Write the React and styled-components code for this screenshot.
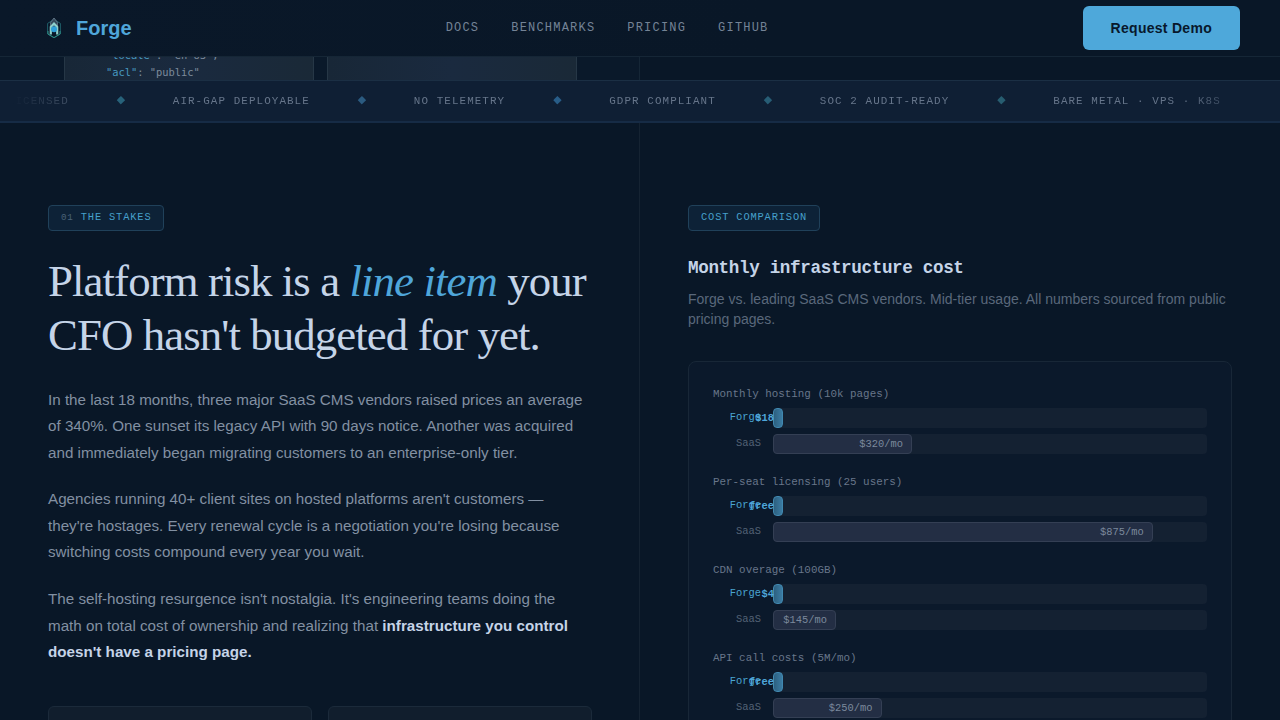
import React from 'react';
import styled, { createGlobalStyle } from 'styled-components';

const sans = "'Liberation Sans', Arial, sans-serif";
const serif = "'Liberation Serif', Georgia, serif";
const mono = "'Liberation Mono', 'Courier New', monospace";

const GlobalStyle = createGlobalStyle`
  * {
    box-sizing: border-box;
  }
  body {
    margin: 0;
    background: #091727;
    color: #c8d8e8;
    font-family: ${sans};
    overflow: hidden;
  }
  h2, h3, p {
    margin: 0;
  }
`;

//page frame
const Page = styled.div`
  height: 720px;
  display: flex;
  flex-direction: column;
  overflow: hidden;
`;
const Nav = styled.nav`
  flex: none;
  height: 57px;
  padding: 0 40px;
  display: flex;
  align-items: center;
  justify-content: space-between;
  background: linear-gradient(90deg, #0a1829, #091727 60%);
  border-bottom: 1px solid #152636;
`;
const Brand = styled.a`
  display: flex;
  align-items: center;
  gap: 8px;
  font-size: 20px;
  font-weight: 700;
  line-height: 28px;
  color: #4fa6da;
`;
const NavLinks = styled.div`
  display: flex;
  gap: 32px;
  padding-bottom: 1px;
`;
const NavLink = styled.a`
  font-family: ${mono};
  font-size: 12px;
  letter-spacing: 1.2px;
  text-transform: uppercase;
  color: #748396;
`;
const DemoButton = styled.button`
  height: 44px;
  padding: 0 28px;
  border: 0;
  border-radius: 6px;
  background: #4ea8da;
  color: #08182c;
  font-family: ${sans};
  font-size: 14px;
  font-weight: 700;
  letter-spacing: 0.28px;
`;

//bottom edge of the hero, scrolled under the nav
const Hero = styled.div`
  flex: none;
  height: 23px;
  display: grid;
  grid-template-columns: 1fr 1fr;
  overflow: hidden;
`;
const HeroCards = styled.div`
  display: flex;
  gap: 13px;
  padding: 0 62px 0 64px;
  background: #0a192a;
  border-right: 1px solid #152636;
`;
const CodeCard = styled.pre`
  flex: 1;
  margin: 0;
  padding: 0 0 0 41px;
  height: 23px;
  display: flex;
  flex-direction: column;
  justify-content: flex-end;
  border: solid #263746;
  border-width: 0 1px;
  background: linear-gradient(90deg, #182737, #1a2a3f 50%, #1a2937);
  font-family: 'DejaVu Sans Mono', monospace;
  font-size: 10.4px;
  line-height: 17px;
  color: #7c8a9b;
`;
const Key = styled.span`
  color: #4798c0;
`;
const CodeLine = styled.span`
  flex: none;
  &.last {
    height: 16px;
  }
`;

//ticker
const Ticker = styled.div`
  flex: none;
  height: 43px;
  background: #0f1f34;
  border-top: 1px solid #1b2f44;
  border-bottom: 2px solid #162b45;
  overflow: hidden;
`;
const TickerTrack = styled.div`
  height: 40px;
  display: flex;
  justify-content: flex-start;
  overflow: hidden;
  mask-image: linear-gradient(90deg, transparent 1%, #000 9%, #000 92%, transparent 99%);
`;
const TickerRow = styled.div`
  display: flex;
  align-items: center;
  gap: 48px;
  margin-left: -22.6px;
  white-space: nowrap;
`;
const TickerItem = styled.span`
  font-family: ${mono};
  font-size: 10.88px;
  letter-spacing: 1.088px;
  color: #66758a;
`;
const Diamond = styled.span`
  width: 8px;
  font-family: 'DejaVu Sans', sans-serif;
  font-size: 10.88px;
  line-height: 12px;
  padding-bottom: 2px;
  color: ${props => props.color};
`;

//two columns
const Columns = styled.div`
  flex: 1;
  min-height: 0;
  display: grid;
  grid-template-columns: 1fr 1fr;
`;
const Column = styled.section`
  padding: 82px 48px 0;
  &.left {
    padding-right: 47px;
    border-right: 1px solid #152332;
  }
`;
const Tag = styled.div`
  width: fit-content;
  height: 26px;
  padding: 0 12px;
  line-height: 22px;
  border: 1px solid #20415a;
  border-radius: 4px;
  background: #0d2237;
  font-family: ${mono};
  font-size: 10.4px;
  letter-spacing: 0.832px;
  text-transform: uppercase;
  color: #46a0cc;
`;
const TagNumber = styled.span`
  font-size: 9.2px;
  color: #4a6277;
`;
const Title = styled.h2`
  margin-top: 24px;
  font-family: ${serif};
  font-size: 44.8px;
  font-weight: 400;
  line-height: 53.76px;
  letter-spacing: -0.896px;
  white-space: nowrap;
  color: #c5d4e8;
  em {
    color: #4fa6da;
  }
`;
const Body = styled.div`
  margin-top: 23.97px;
  display: flex;
  flex-direction: column;
  gap: 20px;
`;
const P = styled.p`
  font-size: 15.2px;
  line-height: 26.6px;
  color: #8290a2;
  strong {
    color: #c5d4e8;
  }
`;
const Stats = styled.div`
  margin-top: 40px;
  display: grid;
  grid-template-columns: 1fr 1fr;
  gap: 16px;
`;
const Stat = styled.div`
  height: 110px;
  border: 1px solid #1b2a3a;
  border-radius: 6px;
  background: #111e2d;
`;
const ChartTitle = styled.h3`
  margin-top: 26px;
  font-family: ${mono};
  font-size: 17.6px;
  line-height: 22px;
  letter-spacing: -0.352px;
  color: #c5d4e8;
`;
const ChartNote = styled.p`
  margin-top: 10px;
  font-size: 14px;
  line-height: 20.2px;
  color: #5a687b;
`;
const Chart = styled.div`
  height: 420px;
  margin-top: 32px;
  padding: 24px;
  display: flex;
  flex-direction: column;
  gap: 20px;
  border: 1px solid #182737;
  border-radius: 8px;
  background: #0b192b;
`;
const Group = styled.div`
  display: flex;
  flex-direction: column;
  gap: 6px;
`;
const GroupLabel = styled.div`
  height: 16px;
  line-height: 16px;
  font-family: ${mono};
  font-size: 10.88px;
  color: #68768a;
`;
const BarRow = styled.div`
  display: flex;
  gap: 12px;
`;
const BarLabel = styled.span`
  width: 48px;
  line-height: 18px;
  text-align: right;
  font-family: ${mono};
  font-size: 10.4px;
  color: ${props => (props.$own ? '#4aa5d2' : '#546376')};
`;
const BarTrack = styled.div`
  flex: 1;
  height: 20px;
  border-radius: 4px;
  background: #142132;
`;
const Bar = styled.div`
  height: 20px;
  padding-right: 8px;
  display: flex;
  align-items: center;
  justify-content: flex-end;
  border: 1px solid ${props => (props.$own ? '#4088b0' : '#343f54')};
  border-radius: 4px;
  background: ${props => (props.$own ? 'linear-gradient(90deg, #2d6080, #3b7ba2)' : '#232e44')};
  font-family: ${mono};
  font-size: 10.4px;
  font-weight: ${props => (props.$own ? 700 : 400)};
  color: ${props => (props.$own ? '#4fa6da' : '#7b899c')};
`;

const links = ['Docs', 'Benchmarks', 'Pricing', 'GitHub'];

const tickerItems = [
  { text: 'MIT LICENSED', color: '#27627a' },
  { text: 'AIR-GAP DEPLOYABLE', color: '#2b5b80' },
  { text: 'NO TELEMETRY', color: '#285d88' },
  { text: 'GDPR COMPLIANT', color: '#275d75' },
  { text: 'SOC 2 AUDIT-READY', color: '#275d70' },
  { text: 'BARE METAL · VPS · K8S', color: '#275d70' }
];

// a full track is $1000 a month
const costs = [
  { label: 'Monthly hosting (10k pages)', forge: '$18', forgeCost: 18, saas: 320 },
  { label: 'Per-seat licensing (25 users)', forge: 'free', forgeCost: 0, saas: 875 },
  { label: 'CDN overage (100GB)', forge: '$4', forgeCost: 4, saas: 145 },
  { label: 'API call costs (5M/mo)', forge: 'free', forgeCost: 0, saas: 250 }
];

const Logo = () => (
  <svg width="28" height="28" viewBox="0 0 28 28" fill="none">
    <path d="M14 5.5 L7.6 9.4 V20 L14 23.8 L20.4 20 V9.4 Z" stroke="#1f5f6a" strokeWidth="1" />
    <path d="M14 4 L10.6 8.4 V12 H17.4 V8.4 Z" fill="#33485a" stroke="#6f8394" strokeWidth="0.8" />
    <path d="M10.8 20.6 V13 L14 9.6 L17.2 13 V20.6" stroke="#8fcfcb" strokeWidth="2.2" />
    <path d="M8 17 V20 L14 23.6 L20 20 V17" stroke="#2d8f86" strokeWidth="1" />
    <circle cx="14" cy="15.3" r="3" fill="#2d9ed8" />
  </svg>
);

const CostGroup = ({ cost }) => (
  <Group>
    <GroupLabel>{cost.label}</GroupLabel>
    <BarRow>
      <BarLabel $own>Forge</BarLabel>
      <BarTrack>
        <Bar $own style={{ width: cost.forgeCost / 10 + '%' }}>
          {cost.forge}
        </Bar>
      </BarTrack>
    </BarRow>
    <BarRow>
      <BarLabel>SaaS</BarLabel>
      <BarTrack>
        <Bar style={{ width: cost.saas / 10 + '%' }}>{'$' + cost.saas + '/mo'}</Bar>
      </BarTrack>
    </BarRow>
  </Group>
);

const App = () => {
  return (
    <Page>
      <GlobalStyle />
      <Nav>
        <Brand>
          <Logo />
          Forge
        </Brand>
        <NavLinks>
          {links.map(link => (
            <NavLink key={link}>{link}</NavLink>
          ))}
        </NavLinks>
        <DemoButton>Request Demo</DemoButton>
      </Nav>
      <Hero>
        <HeroCards>
          <CodeCard>
            <CodeLine>
              <Key>"locale"</Key>: "en-US",
            </CodeLine>
            <CodeLine className="last">
              <Key>"acl"</Key>: "public"
            </CodeLine>
          </CodeCard>
          <CodeCard />
        </HeroCards>
      </Hero>
      <Ticker>
        <TickerTrack>
          <TickerRow>
            {tickerItems.map(item => (
              <React.Fragment key={item.text}>
                <TickerItem>{item.text}</TickerItem>
                <Diamond color={item.color}>◆</Diamond>
              </React.Fragment>
            ))}
          </TickerRow>
        </TickerTrack>
      </Ticker>
      <Columns>
        <Column className="left">
          <Tag>
            <TagNumber>01</TagNumber> The Stakes
          </Tag>
          <Title>
            Platform risk is a <em>line item</em> your
            <br />
            CFO hasn't budgeted for yet.
          </Title>
          <Body>
            <P>
              In the last 18 months, three major SaaS CMS vendors raised prices an average of 340%. One sunset its
              legacy API with 90 days notice. Another was acquired and immediately began migrating customers to an
              enterprise-only tier.
            </P>
            <P>
              Agencies running 40+ client sites on hosted platforms aren't customers — they're hostages. Every renewal
              cycle is a negotiation you're losing because switching costs compound every year you wait.
            </P>
            <P>
              The self-hosting resurgence isn't nostalgia. It's engineering teams doing the math on total cost of
              ownership and realizing that <strong>infrastructure you control doesn't have a pricing page.</strong>
            </P>
          </Body>
          <Stats>
            <Stat />
            <Stat />
          </Stats>
        </Column>
        <Column>
          <Tag>Cost Comparison</Tag>
          <ChartTitle>Monthly infrastructure cost</ChartTitle>
          <ChartNote>
            Forge vs. leading SaaS CMS vendors. Mid-tier usage. All numbers sourced from public pricing pages.
          </ChartNote>
          <Chart>
            {costs.map(cost => (
              <CostGroup key={cost.label} cost={cost} />
            ))}
          </Chart>
        </Column>
      </Columns>
    </Page>
  );
};

export default App;
